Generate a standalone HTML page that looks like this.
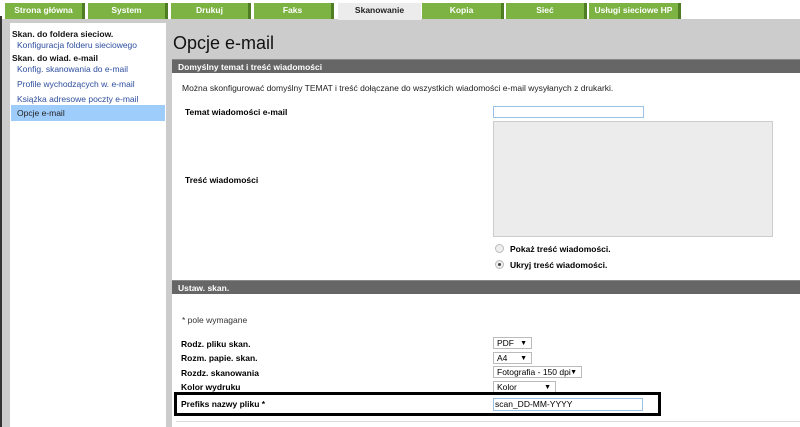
<!DOCTYPE html>
<html><head><meta charset="utf-8"><style>
*{margin:0;padding:0;box-sizing:border-box}
body{width:800px;height:427px;overflow:hidden;background:#cccccc;font-family:"Liberation Sans",Arial,sans-serif;font-size:8px;color:#000;position:relative}
.top{position:absolute;left:0;top:0;width:800px;height:19px;background:#fff}
.tab{position:absolute;top:3px;height:16px;background:#7cb342;color:#fff;font-weight:bold;font-size:8.5px;text-align:center;line-height:14px;border-right:3px solid #4e7d24}
.tab.act{background:#ececec;color:#222;border-right:none;height:17px}
.strip{position:absolute;left:0;top:16px;width:2px;height:411px;background:#333}
.side{position:absolute;left:10px;top:23px;width:156px;height:404px;background:#fff}
.side div{position:absolute;left:2px;font-size:8.5px;white-space:nowrap}
.side .h{font-weight:bold;color:#111}
.side .l{color:#2d4e9e;left:7px}
.sel{background:#9fcdfb;width:154px;height:16px;line-height:16px}
.main{position:absolute;left:172px;top:59px;width:628px;height:368px;background:#fff}
h1{position:absolute;left:173px;top:33px;font-weight:normal;font-size:18px;color:#111}
.bar{position:absolute;left:0;width:628px;height:14px;background:#666;color:#fff;font-weight:bold;font-size:8.5px;line-height:14px;padding-left:6px;border-top:1px solid #888}
.t{position:absolute;white-space:nowrap;font-size:8.5px}
.b{font-weight:bold}
.inp{position:absolute;background:#fff;border:1px solid #9cc0e6}
.sel2{position:absolute;border:1px solid #bbb;background:#fff;height:12px;font-size:8.5px;line-height:10px;padding-left:3px;white-space:nowrap}
.sel2 span{position:absolute;right:4px;top:1px;font-size:7px;line-height:10px}
.radio{position:absolute;width:9px;height:9px;border-radius:50%;border:1px solid #bbb;background:#eee}
</style></head><body>
<div class="top"></div>
<div class="tab" style="left:5px;width:80px">Strona główna</div>
<div class="tab" style="left:88px;width:80px">System</div>
<div class="tab" style="left:171px;width:80px">Drukuj</div>
<div class="tab" style="left:254px;width:80px">Faks</div>
<div class="tab act" style="left:338px;width:83px">Skanowanie</div>
<div class="tab" style="left:422px;width:82px">Kopia</div>
<div class="tab" style="left:506px;width:81px">Sieć</div>
<div class="tab" style="left:589px;width:92px">Usługi sieciowe HP</div>
<div class="strip"></div>
<div class="side">
<div class="h" style="top:6px">Skan. do foldera sieciow.</div>
<div class="l" style="top:17px">Konfiguracja folderu sieciowego</div>
<div class="h" style="top:30px">Skan. do wiad. e-mail</div>
<div class="l" style="top:41px">Konfig. skanowania do e-mail</div>
<div class="l" style="top:56px">Profile wychodzących w. e-mail</div>
<div class="l" style="top:71px">Książka adresowe poczty e-mail</div>
<div class="sel" style="top:82px;left:1px;padding-left:6px;color:#222">Opcje e-mail</div>
</div>
<h1>Opcje e-mail</h1>
<div class="main">
<div class="bar" style="top:0">Domyślny temat i treść wiadomości</div>
<div class="t" style="left:10px;top:24px;color:#222">Można skonfigurować domyślny TEMAT i treść dołączane do wszystkich wiadomości e-mail wysyłanych z drukarki.</div>
<div class="t b" style="left:13px;top:48px">Temat wiadomości e-mail</div>
<div class="inp" style="left:321px;top:47px;width:151px;height:12px"></div>
<div style="position:absolute;left:321px;top:62px;width:280px;height:116px;background:#ececec;border:1px solid #ccc"></div>
<div class="t b" style="left:13px;top:116px">Treść wiadomości</div>
<div class="radio" style="left:323px;top:185px"></div>
<div class="t b" style="left:338px;top:185px">Pokaż treść wiadomości.</div>
<div class="radio" style="left:323px;top:201px"><div style="width:3px;height:3px;background:#444;border-radius:50%;margin:2px"></div></div>
<div class="t b" style="left:338px;top:201px">Ukryj treść wiadomości.</div>
<div class="bar" style="top:221px">Ustaw. skan.</div>
<div class="t" style="left:10px;top:256px;color:#333">* pole wymagane</div>
<div class="t b" style="left:9px;top:280px">Rodz. pliku skan.</div>
<div class="t b" style="left:9px;top:294px">Rozm. papie. skan.</div>
<div class="t b" style="left:9px;top:309px">Rozdz. skanowania</div>
<div class="t b" style="left:9px;top:323px">Kolor wydruku</div>
<div class="sel2" style="left:321px;top:278px;width:39px">PDF<span>▼</span></div>
<div class="sel2" style="left:321px;top:293px;width:39px">A4<span>▼</span></div>
<div class="sel2" style="left:321px;top:307px;width:89px">Fotografia - 150 dpi<span>▼</span></div>
<div class="sel2" style="left:321px;top:322px;width:63px">Kolor<span>▼</span></div>
<div style="position:absolute;left:2px;top:333px;width:487px;height:24px;border:3px solid #000;background:#fff"></div>
<div class="t b" style="left:9px;top:340px">Prefiks nazwy pliku *</div>
<div class="inp" style="left:321px;top:339px;width:150px;height:13px;font-size:8.5px;line-height:11px;padding-left:1px">scan_DD-MM-YYYY</div>
<div style="position:absolute;left:4px;top:362px;width:624px;height:1px;background:#ddd"></div>
</div>
</body></html>
